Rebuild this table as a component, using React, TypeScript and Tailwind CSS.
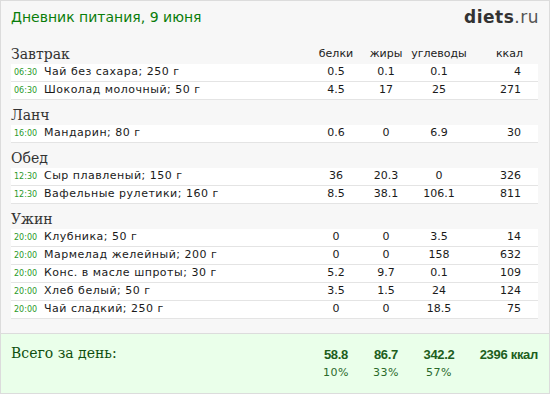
import React from "react";

type Item = { time: string; name: string; p: string; f: string; c: string; k: string };
type Meal = { title: string; items: Item[] };

const meals: Meal[] = [
  {
    title: "Завтрак",
    items: [
      { time: "06:30", name: "Чай без сахара; 250 г", p: "0.5", f: "0.1", c: "0.1", k: "4" },
      { time: "06:30", name: "Шоколад молочный; 50 г", p: "4.5", f: "17", c: "25", k: "271" },
    ],
  },
  {
    title: "Ланч",
    items: [{ time: "16:00", name: "Мандарин; 80 г", p: "0.6", f: "0", c: "6.9", k: "30" }],
  },
  {
    title: "Обед",
    items: [
      { time: "12:30", name: "Сыр плавленый; 150 г", p: "36", f: "20.3", c: "0", k: "326" },
      { time: "12:30", name: "Вафельные рулетики; 160 г", p: "8.5", f: "38.1", c: "106.1", k: "811" },
    ],
  },
  {
    title: "Ужин",
    items: [
      { time: "20:00", name: "Клубника; 50 г", p: "0", f: "0", c: "3.5", k: "14" },
      { time: "20:00", name: "Мармелад желейный; 200 г", p: "0", f: "0", c: "158", k: "632" },
      { time: "20:00", name: "Конс. в масле шпроты; 30 г", p: "5.2", f: "9.7", c: "0.1", k: "109" },
      { time: "20:00", name: "Хлеб белый; 50 г", p: "3.5", f: "1.5", c: "24", k: "124" },
      { time: "20:00", name: "Чай сладкий; 250 г", p: "0", f: "0", c: "18.5", k: "75" },
    ],
  },
];

const sans = "font-['DejaVu_Sans',sans-serif]";
const serif = "font-['DejaVu_Serif',serif]";

const Row = ({ item }: { item: Item }) => (
  <div className={`flex h-[18px] items-center border-b border-[#e4e4e4] bg-white text-[11px] text-[#1a1a1a] ${sans}`}>
    <div className="flex flex-1 items-center pl-[3px]">
      <span className="w-[30px] text-[8px] text-[#2a9a2a]">{item.time}</span>
      <span className="tracking-[0.5px]">{item.name}</span>
    </div>
    <span className="w-[50px] text-center">{item.p}</span>
    <span className="w-[50px] text-center">{item.f}</span>
    <span className="w-[56px] text-center">{item.c}</span>
    <span className="w-[71px] pr-[17px] text-right">{item.k}</span>
  </div>
);

export default function App() {
  return (
    <div className="flex h-[394px] w-[550px] flex-col border border-[#dcdcdc] bg-[#f7f7f7]">
      {/* header */}
      <div className="flex h-[38px] items-center justify-between px-[10px] pb-[5px]">
        <span className={`text-[14px] text-[#0a7d0a] ${sans}`}>Дневник питания, 9 июня</span>
        <span className={`text-[17px] tracking-[0.5px] ${sans}`}>
          <b className="text-[#333]">diets</b>
          <span className="text-[#555]">.ru</span>
        </span>
      </div>

      <div className="px-[10px] pr-[11px]">
        {meals.map((meal, i) => (
          <div key={meal.title}>
            <div className="flex h-[25px] items-start pt-[6px]">
              <span className={`flex-1 text-[14px] leading-[18px] text-[#333] ${serif}`}>{meal.title}</span>
              {i === 0 && (
                <div className={`flex text-[11px] leading-[18px] text-[#222] ${sans}`}>
                  <span className="w-[50px] text-center">белки</span>
                  <span className="w-[50px] text-center">жиры</span>
                  <span className="w-[56px] text-center">углеводы</span>
                  <span className="w-[71px] pr-[15px] text-right">ккал</span>
                </div>
              )}
            </div>
            {meal.items.map((it, j) => (
              <Row key={j} item={it} />
            ))}
          </div>
        ))}
      </div>

      {/* totals */}
      <div className="mt-auto flex h-[60px] border-t border-[#dcdcdc] bg-[#eaffea] px-[10px] pr-[11px] pt-[10px]">
        <span className={`flex-1 text-[14px] leading-[18px] text-[#0f4f0f] ${serif}`}>Всего за день:</span>
        <div className="flex flex-col">
          <div className="flex pt-[2px] font-['Liberation_Sans',sans-serif] text-[13px] font-bold leading-[18px] tracking-[-0.3px] text-[#1d5e1d]">
            <span className="w-[50px] text-center">58.8</span>
            <span className="w-[50px] text-center">86.7</span>
            <span className="w-[56px] text-center">342.2</span>
            <span className="w-[71px] text-right">2396 ккал</span>
          </div>
          <div className={`flex text-[11px] leading-[18px] tracking-[0.5px] text-[#2a6a2a] ${sans}`}>
            <span className="w-[50px] text-center">10%</span>
            <span className="w-[50px] text-center">33%</span>
            <span className="w-[56px] text-center">57%</span>
            <span className="w-[71px]" />
          </div>
        </div>
      </div>
    </div>
  );
}
